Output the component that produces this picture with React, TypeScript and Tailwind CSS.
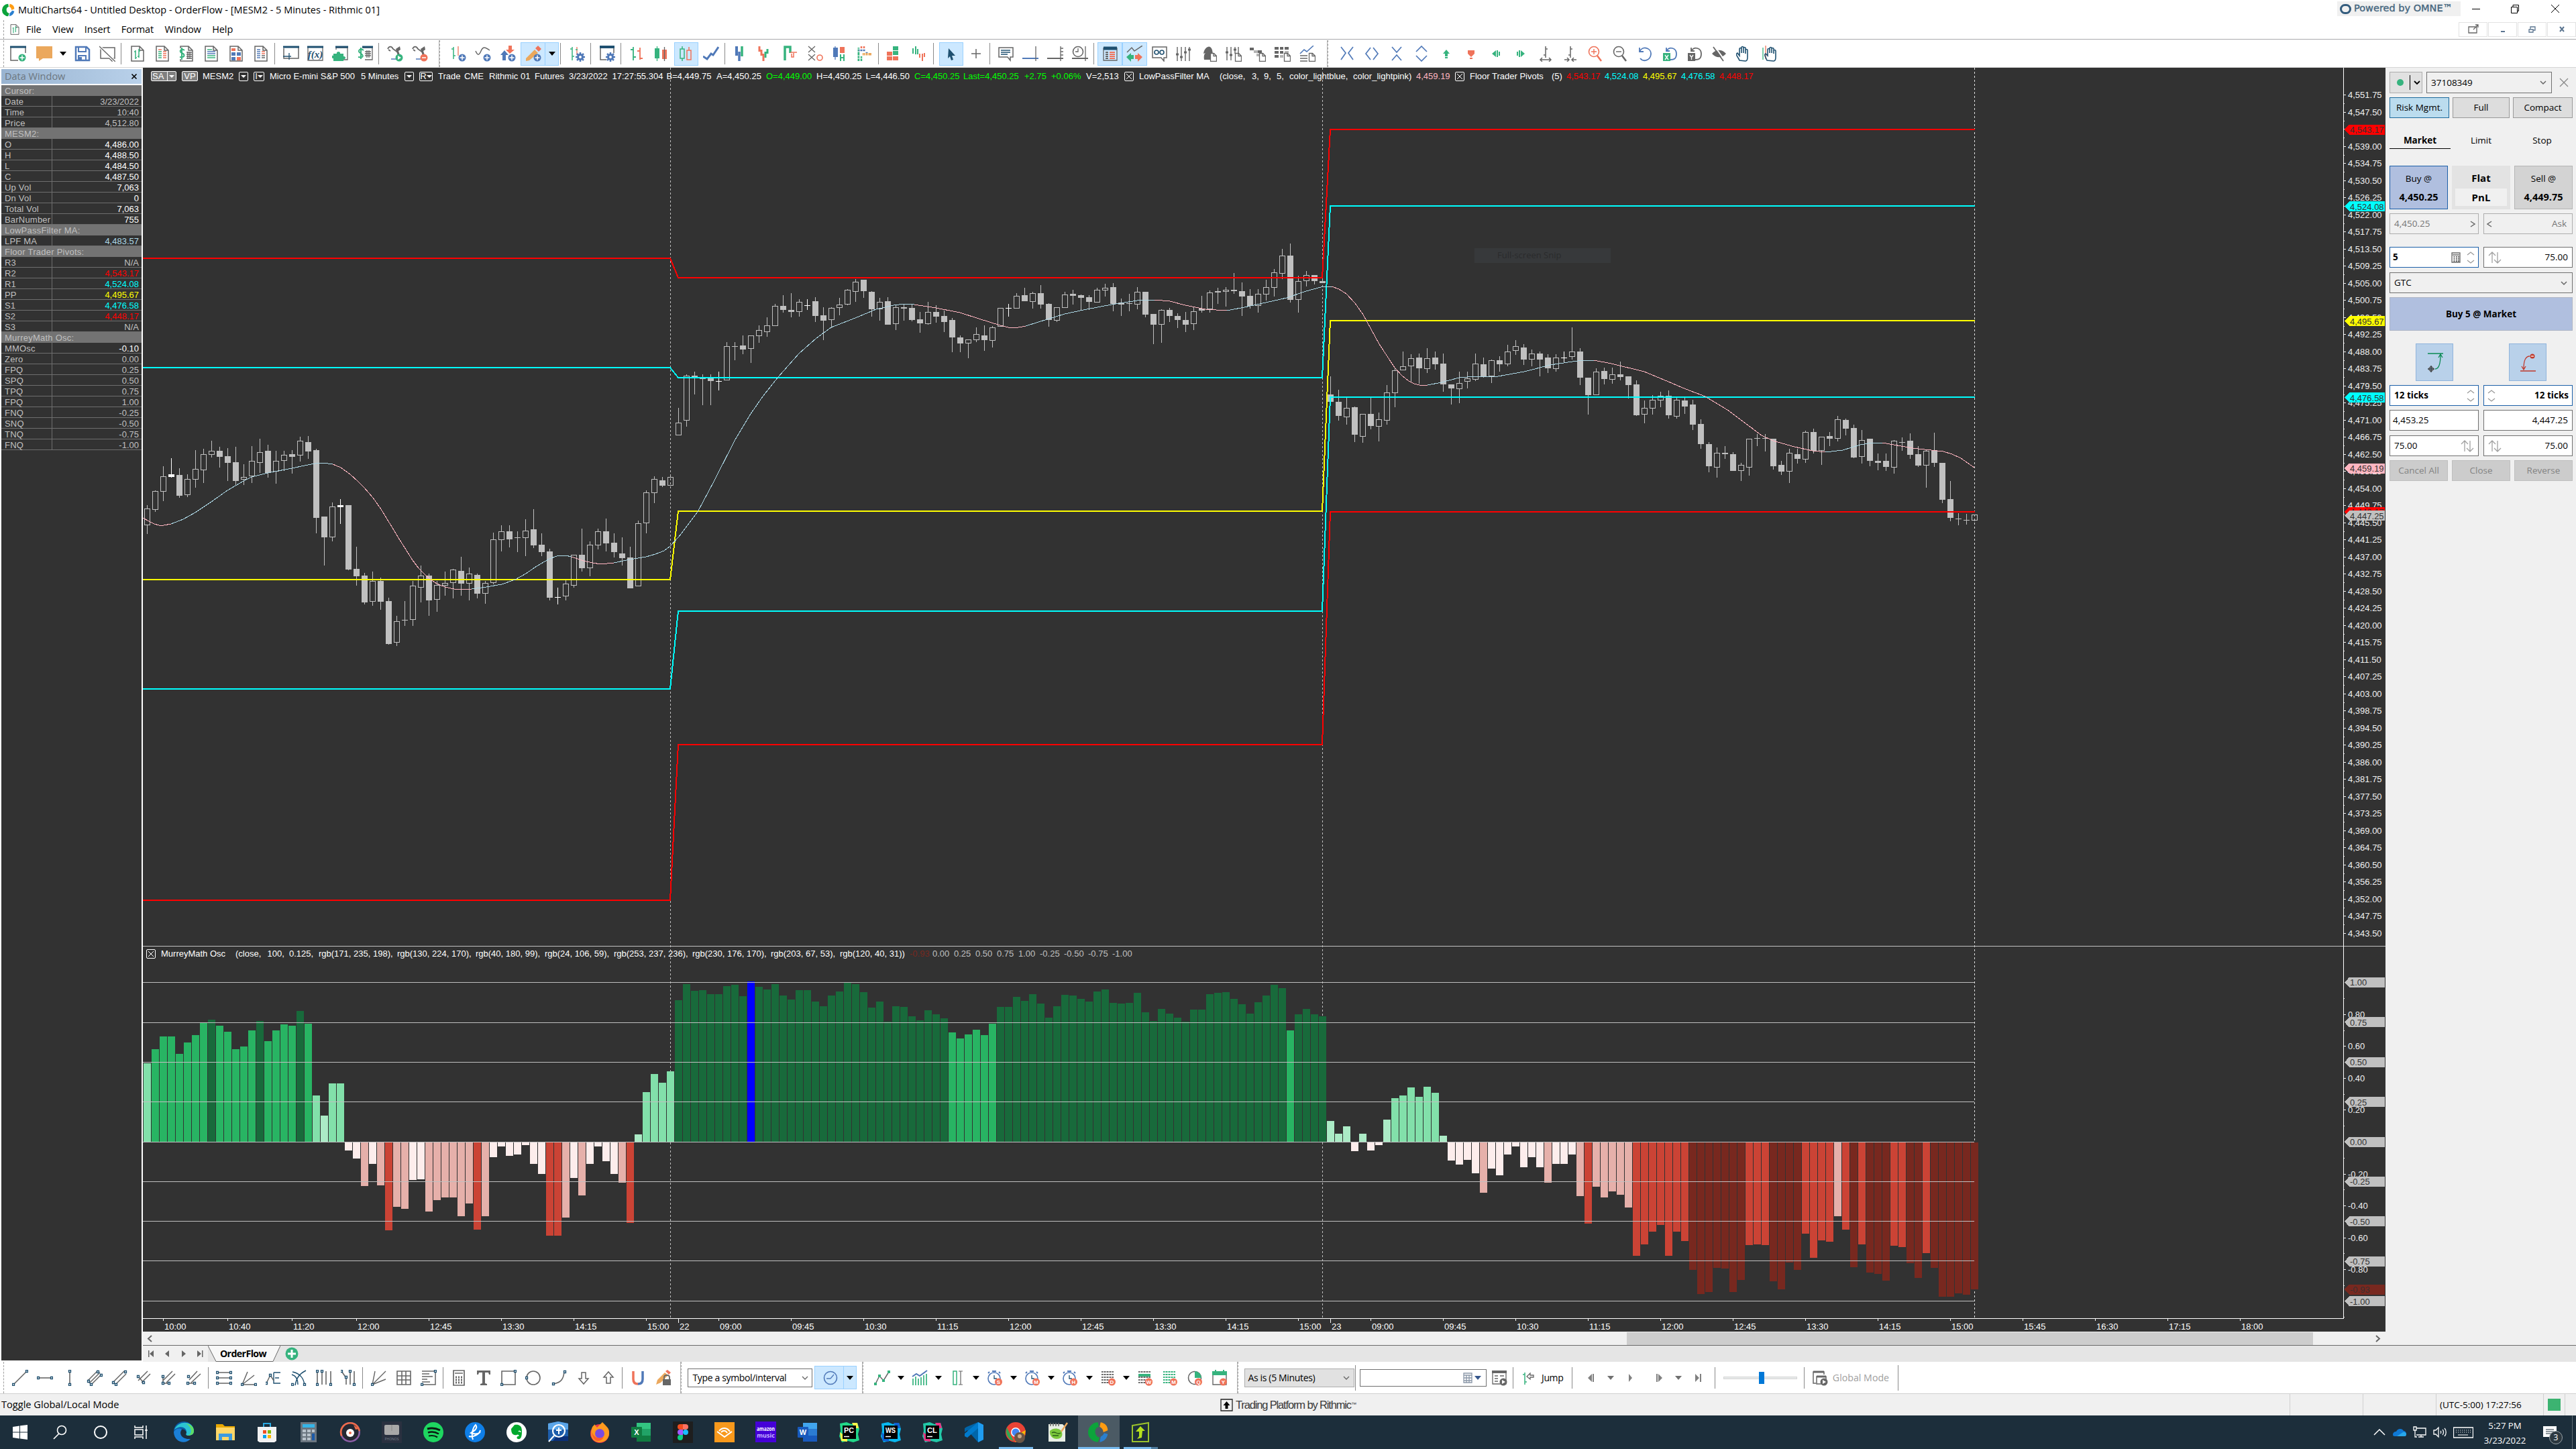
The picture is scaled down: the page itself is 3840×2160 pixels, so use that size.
import type { ReactNode } from 'react';

/* ---------- glyphs ---------- */

const ink: Record<string, string> = {
  k: '#666666',
  g: '#36b37e',
  r: '#ef735a',
  b: '#5079b8',
  n: '#1f5070',
  y: '#eba85d',
  l: '#b4b4b4',
  w: '#ffffff',
  x: '#000000',
};

// "k2 M0 0h4" strokes, "+g M..." fills; shapes are divided by |
function Glyph({ d, size = 24, box = 24, label, labelX = 17.5, labelY = 21 }: { d: string; size?: number; box?: number; label?: string; labelX?: number; labelY?: number }) {
  return (
    <svg width={size} height={size} viewBox={`0 0 ${box} ${box}`} className="shrink-0">
      {d.split('|').map((part, i) => {
        const m = part.match(/^(\+?)(#[0-9a-f]{6}|[a-z])\s?([\d.]*)\s(.*)$/);
        if (!m) return null;
        const color = ink[m[2]] ?? m[2];
        return m[1] ? (
          <path key={i} d={m[4]} fill={color} />
        ) : (
          <path key={i} d={m[4]} fill="none" stroke={color} strokeWidth={m[3] || 1.3} />
        );
      })}
      {label && (
        <text x={labelX} y={labelY} fontSize="8" fontWeight="bold" fill="#fff" textAnchor="middle" fontFamily="Liberation Sans, sans-serif">
          {label}
        </text>
      )}
    </svg>
  );
}

const circle = (x: number, y: number, r: number) => `M${x - r} ${y}a${r} ${r} 0 1 0 ${2 * r} 0a${r} ${r} 0 1 0 ${-2 * r} 0`;
const disc = (c: string, x = 18, y = 18, r = 5.5) => `+${c} ${circle(x, y, r)}`;
const ring = (c: string, x: number, y: number, r: number) => `${c} ${circle(x, y, r)}`;
const plus = (c: string) => `${disc(c)}|w1.5 M18 14.5v7M14.5 18h7`;
const page = 'k1.5 M3 1h12l6 6v16H3ZM15 1v6h6';
const gear = `${disc('b', 17, 17, 5)}|b2.5 M17 10v14M10 17h14M12 12l10 10M22 12l-10 10|${disc('w', 17, 17, 2)}`;
const sheet = '+w M14 11h9v13h-9Z|k1.3 M14.5 11.5h5l4 4v8h-9ZM19 11.5v4h4';
const clock = `${ring('b1.6', 11, 13, 9)}|b2 M8 2h6M2 5l2-2M20 5l-2-2|n M11 8v5h4|${disc('r', 17.5, 18, 5.5)}`;
const table = (c: string) => `${c}2 M2 3h18M2 7h18M2 11h18M2 15h18M2 19h18|w1 M5 1v20M9 1v20M13 1v20M17 1v20|${disc('r', 17.5, 18, 5.5)}`;
const node = (pts: [number, number][]) => pts.map(([x, y]) => `+w M${x - 1.5} ${y - 1.5}h3v3h-3Z|n1.3 M${x - 1.5} ${y - 1.5}h3v3h-3Z`).join('|');

const fileIcons = [
  page + '|g1.5 M9 7v13M7 9h2M9 18h2M14 5v13M12 16h2M14 8h2',
  page + '|g1.5 M6 9h5M6 12h5M6 15h5M6 18h5|r1.5 M13 9h5M13 12h5M13 15h5M13 18h5M6 6h5',
  page + '|+w M0 4h12v16H0Z|g2 M9 7c-5-4-9 2-4 4s5 7-3 6M5 3v18|k M12 10h8M12 13h8M12 16h8M12 19h8M14 9v11M17 9v11',
  page + '|g1.5 M6 6h7|b1.5 M6 9h12M6 12h12|g1.5 M6 15h12M6 18h12',
  page + '|+b M5 10h6v5H5ZM13 10h6v5h-6Z|+r M5 4h6v4H5ZM13 17h6v5h-6Z|+b M5 17h6v5H5Z',
  page + '|b1.5 M6 6h5M6 9h5M6 12h5M6 15h5M6 18h5|r1.5 M13 9h5M13 12h5|k1.5 M13 15h5M13 18h5',
];
const insertIcons = [
  'k1.5 M1 4v15h22V3|n3 M0 2h24|n1.3 M0 16h12M9 11v10',
  'k1.3 M6 6V3h17v18h-6|n3 M5 2h19|+g M2 12h5c-1-4 6-4 5 0h5v4c4-1 4 5 0 4v3H2v-4c-4 0-4-5 0-4Z',
  'k1.3 M8 3h15v18H12|n3 M8 2h16|g2 M10 7C5 3 0 8 5 11s6 8-3 6M6 3v17|k M12 9h9M12 12h9M12 15h9M15 7v11M18 7v11',
];
const arm = 'k1.8 M1 5c2-5 6-4 8 0l7 5M2 6l3 2|+k M13 5l6-4 1 5-3 2 3 9-4-2Z|b1.5 M6 20h9';
const seriesIcons = ['r M12 1v14|g1.5 M5 2v18M2 5h3M5 15h3', 'k1.5 M1 8c3 7 5 7 8 0s6-6 13-1', '+r M13 0h5v6h4l-7 6-6-6h4Z|+b M1 14l6-7 6 7H9v8H4v-8Z'];

const styleIcons = [
  'g1.8 M7 2v20M3 6h4M7 17h4|r1.8 M17 3v18M13 8h4M17 19h4',
  '+g M2 4h7v15H2Z|+r M13 6h7v14h-7Z|g M5.5 1v22|k M16.5 2v21',
  'g1.5 M3 5h6v14H3ZM6 1v4M6 19v4|r1.5 M13 7h6v14h-6ZM16 2v5',
  'b3 M0 16l6 4 6-8 3 2 8-12',
];
const barIcons = [
  'b4 M5 1v14|b3.500 M9 9v14|g3.500 M13 1v15',
  'r3 M3 1v8M6 6v9M9 12v11|g3 M12 9v9M15 5v7',
  'g3.5 M4 22V2h8v9|r1.5 M12 10h10M14 12v5h3v-6',
  'k1.3 M2 1l10 9M12 1L2 10M2 13l10 9M12 13L2 22|' + ring('r1.6', 19, 18, 4),
  '+b M2 3h7v14H2Z|+r M12 2h7v9h-7Z|b M5 1v20|g2 M13 13v10M18 13v10M13 18h5',
  'g3 M3 3v20M7 16v7|r3 M11 1v3M7 1v3|b3 M3 7h10M13 11h4|y4 M8 13h14|w1 M1 5h20M1 9h20M1 15h22M1 19h14M5 0v24M9 0v24M13 0v24M17 0v24',
];
const blockIcons = ['+g M10 1h8v6h-8ZM10 8h8v6h-8Z|+r M1 9h8v6H1ZM1 16h8v6H1ZM10 16h8v6h-8Z', 'g2 M3 4v8M7 1v12M10 5v8|r2 M13 12v6M17 12v11M20 11v6'];
const noteIcons = [
  'k1.5 M2 3h21v14h-4v5l-4-5H2Z|n1.5 M5 7h14M5 10h14M5 13h10',
  'b2 M0 19h24|k1.3 M20 1v22',
  'k2 M0 19h24|k1.3 M20 1v22M20 4h4M20 9h4M20 14h4',
  'k2 M0 19h24|k1.3 M20 1v22|' + ring('k1.6', 9, 9, 7.5) + '|k M9 4v5h-4',
];
const viewIcons = [
  'k1.3 M2 3v19h20V3|n5 M2 4h20|k2 M5 10h4M5 13h4M5 16h4M5 19h4|r2 M11 10h8M11 13h8M11 16h8M11 19h8',
  'k1.5 M1 10l7-7 4 5L24 0|+g M0 17l7-6v3h4v6H7v4Z|+r M24 17l-7-6v3h-4v6h4v4Z',
];
const toolIcons = [
  `k1.5 M2 2h21v16h-4v5l-4-5H2Z|${ring('n1.6', 8, 10, 3)}|${ring('n1.6', 16, 10, 3)}`,
  'k1.4 M2 2v21M8 2v21M14 2v21M20 2v21|k3 M0 13h4M6 17h4M12 10h4M18 6h4',
  '+k M5 21c-1-7 1-9 2-10l-3 1C5 4 11 0 14 2c4 3 4 9 4 19Z|' + sheet,
  'k1.4 M2 2v20M8 2v20M14 2v10M19 2v10|k3 M0 10h4M6 14h4M12 6h4|' + sheet,
  '+k M0 3h6v4H0Z|+l M6 7h6v4H6Z|+k M12 7h6v4h-6Z|+l M10 12h6v4h-6Z|' + sheet,
  '+k M0 2h6v4H0ZM8 2h5v4H8ZM15 2h6v4h-6ZM0 8h6v4H0ZM8 8h5v4H8ZM0 14h6v4H0Z|+l M15 8h6v4h-6ZM8 14h5v4H8Z|' + sheet,
  'b1.6 M1 12l6-6 4 3L21 0|k1.6 M1 15h11M1 19h11M1 23h11|' + sheet,
];
const navIcons = [
  'b1.7 M3 2l7 9-7 10M21 2l-7 9 7 10',
  'b1.7 M10 3l-7 9 7 9M14 3l7 9-7 9',
  'b1.7 M5 2l7 8 7-8M5 22l7-8 7 8',
  'b1.7 M4 9l8-8 8 8M4 15l8 8 8-8',
  '+g M12 6l5 6h-3v4h-4v-4H7ZM10 17h4v2h-4Z',
  '+r M7 7h10v5l-5 5-5-5ZM10 18h4v2h-4Z',
  '+g M6 12l6-5v10ZM13 7h2v10h-2ZM16 9h2v6h-2Z',
  '+g M18 12l-6-5v10ZM9 7h2v10H9ZM6 9h2v6H6Z',
  'k1.5 M12 1v17M12 5h3M9 14h3M4 21h16M7 18l-3 3 3 3M17 18l3 3-3 3',
  'k1.5 M12 1v17M12 5h3M9 14h3M3 21h7M14 21h7M7 18l3 3-3 3M17 18l-3 3 3 3',
  ring('r1.6', 10, 9, 7.5) + '|r1.4 M10 5v8M6 9h8|r2.5 M15 15l6 8',
  ring('k1.6', 10, 9, 7.5) + '|k1.4 M6 9h8|k2.5 M15 15l6 8',
  'b1.8 M4 3v6h6M4 9c5-10 18-5 17 4s-11 12-16 6',
  'b1.8 M7 3v5h5M7 8c5-8 15-4 15 4s-4 9-9 9|+g M2 11h11v12H2Z|w1.3 M5 14l5 7M10 14l-5 7',
  'k1.8 M7 3v5h5M7 8c5-8 15-4 15 4s-4 9-9 9|+k M2 11h11v12H2Z|w1.3 M5 14l2.5 3.5L10 14M7.5 17v4',
  '+k M1 12c6-7 15-7 21 0-6 7-15 7-21 0Z|w2 M5 1l15 21|k1.8 M3 2l15 21',
  'n1.6 M5 22c-2-5-7-9-3-11l3 4V5c0-2 3-2 3 0v6-8c0-2 3-2 3 0v8-7c0-2 3-2 3 0v8-5c0-2 3-2 3 0v10c0 5-2 6-3 6Z',
  'g M3 3v18|r M7 0v20|n1.6 M9 22c-2-5-5-9-2-10l3 3V6c0-2 3-2 3 0v5-7c0-2 3-2 3 0v7-6c0-2 3-2 3 0v7-4c0-2 3-2 3 0v9c0 5-2 6-3 6Z',
];

const drawIcons = [
  ['k1.6 M2 22L22 2|' + node([[2, 22], [22, 2]]), 'k1.6 M2 12h20|' + node([[2, 12], [22, 12]]), 'k1.6 M12 2v20|' + node([[12, 2], [12, 22]]),
    'k1.5 M2 16L17 1M7 22L22 7M4 20L20 4|' + node([[3, 17], [7, 22], [22, 8], [17, 3]]), 'k1.5 M3 18L19 2M6 22L22 6|' + node([[3, 19], [7, 22], [21, 3]]),
    'k1.5 M3 16L17 2M8 19L21 6M3 10l9 10|' + node([[3, 10], [11, 19]]), 'k1.5 M3 16L17 2M8 19L21 6M3 10v10h10|' + node([[3, 10], [3, 20], [12, 20]]), 'k1.5 M5 15L17 2M8 19L22 6M1 20h13|' + node([[4, 10], [3, 20], [13, 20]])],
  ['k1.6 M2 4h20M2 12h20M2 20h20|' + node([[2, 4], [22, 4], [2, 12], [22, 12], [2, 20], [22, 20]]), 'k1.5 M2 22h20M2 22L10 3M2 22L20 8|' + node([[2, 22], [22, 22]]),
    'n1.4 M12 4v16h10M12 4h10M14 12h6|k1.5 M1 20l6-12 5 8|' + node([[1, 20], [7, 8]]), 'n1.5 M2 3c14 3 17 12 18 20M6 23C8 12 12 6 22 1M1 7c8 2 9 9 9 15|' + node([[2, 22], [20, 22]]),
    'k1.6 M2 2v20M9 2v20M15 2v20M22 2v20|' + node([[2, 2], [9, 2], [2, 22], [22, 22]]), 'k1.6 M1 2l7 10M8 11v11M14 2v20M20 2v20|' + node([[1, 2], [8, 11], [14, 2], [20, 22]])],
  ['k1.4 M2 22L6 2M2 22L22 2M2 22l20-8|' + node([[2, 22]]), 'k1.6 M2 2h20v20H2ZM9 2v20M15 2v20M2 9h20M2 15h20', 'k1.5 M2 2h20v20H2M2 6h11M2 10h16M2 14h8M2 18h12|' + node([[2, 22], [22, 2]])],
  ['k1.7 M4 1h16v22H4ZM6 5h12|k3 M7 11h2M11 11h2M15 11h2M7 15h2M11 15h2M15 15h2M7 19h2M11 19h2M15 19h2', '+k M2 1h20v6h-2l-1-3h-5v16l3 1v2H7v-2l3-1V4H5L4 7H2Z', 'k1.6 M2 2h20v20H2Z|' + node([[22, 2], [2, 22]]),
    ring('k1.6', 12, 12, 10) + '|' + node([[2, 12]]), 'k1.6 M4 21c12-2 15-8 16-18|' + node([[4, 21], [21, 3]]), 'k1.5 M9 4h6v9h4l-7 8-7-8h4Z', 'k1.5 M9 20h6v-9h4l-7-8-7 8h4Z'],
];

const Slot = ({ children, on, w = 'w-[36.8px]' }: { children: ReactNode; on?: boolean; w?: string }) => (
  <div className={`flex h-[35px] shrink-0 items-center justify-center ${w} ${on ? 'bg-[#cce8ff] border border-[#99d1ff]' : ''}`}>{children}</div>
);
const Slots = ({ icons, on = [], w }: { icons: string[]; on?: number[]; w?: string }) => (
  <>
    {icons.map((d, i) => (
      <Slot key={i} on={on.includes(i)} w={w}><Glyph d={d} /></Slot>
    ))}
  </>
);
const Sep = ({ wide }: { wide?: boolean }) => <div className={`ml-[2px] h-[32px] w-px shrink-0 bg-[#8a8a8a] ${wide ? 'mr-2' : 'mr-[5px]'}`} />;
const Gutter = () => (
  <div className="flex h-full w-[11px] shrink-0 gap-[3px] border-l border-[#b5b5b5]">
    <div className="h-full border-l border-dashed border-[#a0a0a0]" />
  </div>
);
const Down = ({ c = 'border-t-black' }: { c?: string }) => <div className={`h-0 w-0 border-x-[5px] border-t-[6px] border-x-transparent ${c}`} />;

/* ---------- title, menu, toolbar ---------- */

const MultiChartsLogo = ({ size }: { size: number }) => (
  <svg width={size} height={size} viewBox="0 0 24 24">
    <path d="M11 1A11 11 0 0 0 11 23L13 18C7 17 6 7 12 6Z" fill="#0ca33b" />
    <path d="M14 1c5 1 8 4 8 9l-5 2c0-3-2-5-4-6Z" fill="#ff9c12" />
    <path d="M22 14c-1 5-4 8-9 9l1-6c2-1 3-2 4-4Z" fill="#2a7fcf" />
  </svg>
);

function TitleBar() {
  return (
    <div className="flex h-[30px] items-center pl-[3px] text-[14.5px]">
      <MultiChartsLogo size={20} />
      <span className="ml-[4px]">MultiCharts64 - Untitled Desktop - OrderFlow - [MESM2 - 5 Minutes - Rithmic 01]</span>
      <div className="ml-auto flex h-[22px] w-[184px] items-center gap-1 bg-[#f0f0f0] pl-1 mb-1 font-['DejaVu_Sans'] text-[14.5px] font-medium text-[#46677f]">
        <div className="h-[15px] w-[17px] shrink-0 rounded-full border-[3px] border-[#335c7d]" />
        <span className="whitespace-nowrap [-webkit-text-stroke:0.4px]">Powered by OMNE™</span>
      </div>
      <div className="mb-1 flex w-[172px] items-center">
        <span className="flex w-[46px] justify-center"><i className="h-px w-3 bg-black" /></span>
        <span className="flex w-[70px] justify-center"><Glyph size={14} box={14} d="x1 M1.5 4.5h9v9h-9ZM4 4V1.5h8.5v9H11" /></span>
        <span className="flex w-[49px] justify-center"><Glyph size={14} box={14} d="x1 M1 1l12 12M13 1L1 13" /></span>
      </div>
    </div>
  );
}

const mdiGlyphs = ['k M1 4h12v9H1ZM8 8l7-7M11 1h4v4', '#5b7590 2 M5 11h6', '#5b7590 M3 8h6v4H3ZM5 7V4h7v5h-3', '#5b7590 2 M5 4l6 7M11 4l-6 7'];

function MenuBar() {
  return (
    <div className="flex h-[29px] items-center border-b border-[#a9a9ad] pl-[5px] text-[14.5px]">
      <div className="h-full border-l border-dashed border-[#a0a0a0]" />
      <div className="ml-[8px] mr-[9px]"><Glyph size={16} d={page + '|g1.7 M9 7v13M7 9h2M14 5v13M14 8h2'} /></div>
      {['File', 'View', 'Insert', 'Format', 'Window', 'Help'].map((m) => (
        <span key={m} className="mr-[16.5px] tracking-[-0.1px]">{m}</span>
      ))}
      <div className="ml-auto flex h-full gap-px pt-[3px] pb-[3px]">
        {mdiGlyphs.map((g) => (
          <div key={g} className="flex w-[43px] items-center justify-center border border-[#e2e2e2]"><Glyph size={16} box={16} d={g} /></div>
        ))}
      </div>
    </div>
  );
}

function Toolbar() {
  return (
    <div className="flex h-[41px] items-center border-b border-[#d5d5d5]">
      <div className="ml-[5px] mr-[3px] h-full border-l border-dashed border-[#a0a0a0]" />
      <Slot><Glyph d={'k1.5 M1 2v20h11M23 2v9|n3 M0 2h24|' + plus('g')} /></Slot>
      <div className="flex w-[41px] justify-center"><Glyph d="+y M0 1h24v18H10l-6 4v-4H0Z" /></div>
      <div className="flex w-[18px] justify-center pr-1"><Down /></div>
      <Slots icons={['b2.5 M2 2h16l4 4v16H2Z|b2 M6 2v7h11V2|b2 M6 22v-7h11v7|+b M7 17h4v5H7Z', 'k1.5 M2 3h21v16h-4v4l-4-4H2Z|w4 M0 1l24 23|k1.3 M0 1l24 23']} />
      <Sep />
      <Slots icons={fileIcons} />
      <Sep />
      <Slot><Glyph d={insertIcons[0]} /></Slot>
      <Slot>
        <svg width="24" height="24" viewBox="0 0 24 24">
          <path d="M1 3v19h22V3" fill="none" stroke="#666" strokeWidth="1.3" />
          <path d="M0 0.500h24v3H0Z" fill="#1f5070" />
          <text x="12" y="18" textAnchor="middle" fontSize="15" fontStyle="italic" fontFamily="Liberation Serif, serif" fontWeight="bold" fill="#1f5070">f(x)</text>
        </svg>
      </Slot>
      <Slots icons={insertIcons.slice(1)} />
      <Sep />
      <Slots icons={[arm + `|${disc('g')}|+w M16 15l5 3-5 3Z`, arm + `|${disc('r')}|w1.5 M15 18h6`]} />
      <div className="ml-[10px] flex h-full"><Gutter /></div>
      <Slots icons={seriesIcons.map((s) => s + '|' + plus('b'))} />
      <div className="ml-px flex h-[35px] w-[57px] items-center border border-[#99d1ff] bg-[#cce8ff]">
        <div className="flex h-full w-[36px] items-center justify-center border-r border-[#99d1ff]">
          <Glyph d={'+y M1 19L14 6l5 5L6 22l-5 1Z|+r M15 4l4-4 5 5-4 4Z|' + plus('b')} />
        </div>
        <div className="flex flex-1 justify-center"><Down /></div>
      </div>
      <Sep />
      <Slots icons={['r M12 2v12|g1.5 M5 2v20M2 5h3M5 16h3M10 6h3|' + gear]} />
      <Sep />
      <Slots icons={['k1.5 M2 3v18h9M22 3v8|n4 M1 2h22|' + gear]} />
      <Sep />
      <Slots icons={styleIcons} on={[2]} />
      <Sep />
      <Slots icons={barIcons} />
      <Sep />
      <Slots icons={blockIcons} />
      <Sep wide />
      <Slots icons={['+n M8 4l10 11h-5l2 6-3 1-2-6-3 3Z', 'k1.5 M12 5v14M5 12h14']} on={[0]} />
      <Sep />
      <Slots icons={noteIcons} />
      <Sep />
      <Slots icons={viewIcons} on={[0, 1]} />
      <Slots icons={toolIcons} />
      <div className="ml-[11px] flex h-full"><Gutter /></div>
      <Slots icons={navIcons} w="w-[37px]" />
    </div>
  );
}

/* ---------- data window ---------- */

const dataRows: [string, string?, string?][] = [
  ['Cursor:'], ['Date', '3/23/2022'], ['Time', '10:40'], ['Price', '4,512.80'],
  ['MESM2:'], ['O', '4,486.00', 'text-white'], ['H', '4,488.50', 'text-white'], ['L', '4,484.50', 'text-white'], ['C', '4,487.50', 'text-white'],
  ['Up Vol', '7,063', 'text-white'], ['Dn Vol', '0', 'text-white'], ['Total Vol', '7,063', 'text-white'], ['BarNumber', '755', 'text-white'],
  ['LowPassFilter MA:'], ['LPF MA', '4,483.57', 'text-[#add8e6]'],
  ['Floor Trader Pivots:'], ['R3', 'N/A'], ['R2', '4,543.17', 'text-[#ff0000]'], ['R1', '4,524.08', 'text-[#00ffff]'], ['PP', '4,495.67', 'text-[#ffff00]'],
  ['S1', '4,476.58', 'text-[#00ffff]'], ['S2', '4,448.17', 'text-[#ff0000]'], ['S3', 'N/A'],
  ['MurreyMath Osc:'], ['MMOsc', '-0.10', 'text-white'], ['Zero', '0.00'], ['FPQ', '0.25'], ['SPQ', '0.50'], ['TPQ', '0.75'], ['FPQ', '1.00'],
  ['FNQ', '-0.25'], ['SNQ', '-0.50'], ['TNQ', '-0.75'], ['FNQ', '-1.00'],
];

function DataWindow() {
  return (
    <aside className="flex h-[1929px] w-[213px] shrink-0 flex-col border-2 border-white bg-[#323232] font-['Liberation_Sans'] text-[13px] text-[#c0c0c0]">
      <div className="flex h-[24px] shrink-0 items-center justify-between border-b-2 border-white bg-gradient-to-r from-[#99b4d1] to-[#b9d1ea] pl-[5px] pr-[6px] font-['Open_Sans'] text-[14.5px] text-[#6d7780]">
        <span>Data Window</span>
        <Glyph size={10} box={10} d="x1.6 M1.500 1.500l7 7M8.500 1.500l-7 7" />
      </div>
      {dataRows.map(([k, v, c], i) =>
        v === undefined ? (
          <div key={i} className="h-[16px] bg-[#737373] pl-[5px] leading-[17px] tracking-[0.25px]">{k}</div>
        ) : (
          <div key={i} className="flex h-[16px] border-b border-[#6e6e6e] leading-[17px]">
            <span className="h-[15px] w-[76px] border-r border-[#6e6e6e] pl-[5px] tracking-[0.2px]">{k}</span>
            <span className={`flex-1 pr-[4px] text-right ${c ?? ''}`}>{v}</span>
          </div>
        )
      )}
    </aside>
  );
}

/* ---------- chart ---------- */

const barX = (i: number) => 219 + 12 * i;

// high, body top, body bottom, low; H hollow, F filled, W flagged in white
const candles = `753 758 783 796H 731 732 760 763H 695 710 733 747H 683 707 711 712W 698 708 739 742F 707 714 738 741H 671 699 715 727H 669 677 701 720H
657 672 678 682H 666 672 681 697F 668 680 690 717F 666 689 717 723F 692 711 715 723H 665 687 710 720H 654 674 690 705H 663 672 705 712F
672 687 703 721H 672 678 687 702H 671 677 681 706F 651 657 679 688H 650 659 673 684F 669 671 772 795F 770 770 801 843F 749 755 801 807H
744 753 756 781W 753 753 849 850F 815 848 859 873F 854 858 898 901F 852 866 897 903H 861 866 897 909F 891 896 960 961F 918 926 958 963H
896 924 924 933H 866 873 924 933H 843 858 876 898H 855 858 895 918F 866 872 894 912H 852 869 873 888H 848 849 869 892H 830 851 870 888F
846 855 870 895H 855 857 885 892F 866 869 885 900H 794 804 869 871H 783 792 805 822H 783 792 804 816F 792 801 801 823H 774 791 802 829H
759 789 813 817F 795 812 823 829F 818 822 891 895F 876 890 890 901W 864 870 889 895H 827 827 873 876H 788 827 847 852F 807 812 847 859H
788 792 813 819H 773 792 810 822F 795 809 823 831F 801 825 832 843F 815 831 877 877F 776 780 874 874H 731 734 780 795H 710 714 735 750H
711 716 724 726F 707 711 724 724H 608 630 649 649H 558 560 627 636H 554 560 564 588F 558 564 564 604H 558 564 568 604F 554 568 568 582W
510 516 567 567H 510 516 516 537H 500 515 521 528F 500 500 520 541H 485 492 501 511H 473 485 495 502H 453 456 486 486H 440 456 462 466F
437 462 465 473F 446 450 465 472H 446 455 455 462W 443 449 471 480F 458 470 478 507F 458 459 477 489H 444 454 459 470H 431 432 454 455H
416 420 435 450H 417 417 434 444F 434 435 461 472F 444 450 461 478H 443 449 484 484F 455 458 483 492H 454 458 460 478F 453 459 477 479F
465 476 482 496F 450 465 483 484H 455 465 472 481F 463 471 480 495F 474 477 503 525F 500 503 512 525F 506 506 512 534H 488 498 507 510H
485 500 507 523F 486 488 508 518H 459 459 487 487H 453 459 459 472W 437 441 460 460H 429 440 449 449F 435 437 450 460H 425 437 454 460F
452 453 477 487F 458 458 478 480H 435 439 459 459H 432 438 441 454F 439 440 444 462F 440 443 450 462F 429 432 451 451H 423 429 433 442H
422 428 453 464F 445 451 454 471F 438 452 452 464H 428 435 454 461H 435 435 469 473F 468 468 484 513F 461 462 484 511H 459 462 471 480F
467 471 477 489F 465 477 484 495F 458 464 483 492H 441 460 463 466F 433 436 461 466H 429 434 436 453F 428 432 435 457H 407 432 434 438F
421 434 442 471F 431 441 456 460F 431 438 456 466H 417 428 439 448H 401 406 429 442H 371 381 408 416H 363 381 447 451F 411 419 447 466H
404 410 419 427H 410 410 419 424F 412 419 422 422F 561 588 599 599F 581 599 620 627F 592 608 622 633H 606 607 648 659F 617 617 651 660H
592 617 635 640F 615 625 636 658H 574 585 627 633H 549 552 586 607H 524 546 552 552H 528 534 546 570H 527 533 549 572F 519 534 550 556H
524 533 543 551F 527 542 573 584F 573 573 579 603F 554 571 580 601H 554 564 569 579H 527 542 566 568H 533 543 561 563F 536 537 561 571H
531 537 543 554F 514 524 543 546H 507 516 523 529H 513 518 536 544F 521 527 536 546H 524 527 536 561F 528 533 549 556F 528 533 550 554H
524 533 533 541W 488 524 532 536H 519 524 563 574F 563 563 589 618F 549 554 589 589H 548 553 565 573F 548 558 566 572H 539 558 562 567F
561 561 574 594F 567 573 619 620F 597 608 618 631H 589 596 609 618H 584 590 597 607H 582 590 619 624F 592 596 621 624H 592 597 606 617F
596 603 633 641F 625 632 662 669F 659 662 695 704F 667 675 697 712H 665 675 677 684F 674 677 702 702F 690 693 702 717H 654 654 697 709H
647 653 653 665H 647 653 653 673H 654 654 695 700F 687 693 703 708F 669 675 703 720H 669 677 684 691F 642 644 685 690H 639 644 672 676F
651 651 672 693H 644 650 654 665F 620 625 654 658H 624 626 639 649F 633 638 682 683F 641 656 681 691H 654 654 687 695F 676 687 690 701F
676 687 696 702F 656 657 697 706H 652 659 659 672H 646 657 678 684F 665 677 694 696F 670 672 694 727H 645 671 690 696F 690 690 745 750F
717 744 772 777F 765 773 773 783H 766 775 775 782H 767 767 776 777H`
  .match(/\d+ \d+ \d+ \d+[HFW]/g)!
  .map((s) => ({ v: s.slice(0, -1).split(' ').map(Number), kind: s.slice(-1) }));

// oscillator bars, pixels away from the zero line
const osc = [
  117, 138, 157, 157, 131, 148, 159, 178, 182, 173, 164, 138, 142, 166, 180, 150, 166, 175, 173, 195, 176, 69, 39, 87, 87, -12, -24, -65, -32, -64, -131, -96, -99, -56, -55,
  -103, -86, -82, -82, -110, -91, -130, -110, -22, -6, -20, -18, -4, -32, -47, -139, -139, -112, -53, -79, -32, -6, -28, -47, -60, -120, 11, 74, 101, 88, 105,
  211, 235, 225, 226, 220, 220, 232, 234, 217, 239, 231, 227, 235, 218, 212, 226, 226, 209, 202, 218, 224, 237, 235, 223, 200, 209, 179, 202, 201, 187, 181, 196, 190, 184,
  163, 154, 160, 167, 159, 176, 201, 201, 216, 210, 220, 206, 185, 202, 219, 218, 213, 209, 224, 227, 207, 206, 207, 222, 193, 180, 198, 191, 185, 179, 197, 197, 220, 222,
  223, 213, 205, 191, 208, 218, 234, 229, 166, 190, 198, 190, 187,
  31, 12, 23, -13, 12, -12, -4, 33, 65, 69, 81, 67, 82, 73, 9, -27, -33, -26, -46, -75, -39, -49, -18, -6, -37, -22, -37, -60, -32, -32, -18, -80, -121, -66, -82, -73, -78,
  -97, -169, -152, -133, -123, -169, -133, -147, -190, -226, -223, -187, -188, -223, -205, -153, -152, -153, -207, -219, -179, -190, -136, -172, -146, -148, -110, -130,
  -186, -152, -194, -196, -206, -154, -156, -180, -202, -165, -187, -230, -230, -225, -227, -219,
];
const SELECTED_BAR = 75;
const upShades = ['#abebc6', '#82e0aa', '#28b463', '#186a3b'];
const downShades = ['#fdedec', '#e6b0aa', '#cb4335', '#78281f'];
const shade = (h: number) => (h >= 0 ? upShades : downShades)[Math.min(3, Math.floor(Math.abs(h) / 59.5))];

const average: ['p' | 'b', string][] = [
  ['p', '213,772 222,777 230,781 237,783 244,783 255,781'],
  ['b', '255,781 273,774 291,764 315,748 339,731 363,717 375,711 387,708 399,705 435,698 459,693 470,691 481,690 489,691 496,692'],
  ['p', '496,692 508,697 522,707 533,717 543,727 556,742 568,759 579,777 596,805 615,835 624,847 633,856 642,864 651,870 663,875 677,878 690,879 703,878'],
  ['b', '703,878 725,875 748,871 768,864 784,855 800,844 819,833 830,829 843,828 852,830'],
  ['p', '852,830 870,836 883,839 896,841 915,839'],
  ['b', '915,839 939,834 963,830 977,826 990,821 999,814 1012,800 1025,783 1040,763 1064,718 1095,657 1119,617 1137,591 1160,562 1191,527 1217,504 1239,488 1275,474 1306,461 1332,455 1348,453 1363,454'],
  ['p', '1363,454 1395,459 1431,466 1459,475 1491,485 1503,488 1513,489 1529,486'],
  ['b', '1529,486 1561,476 1587,468 1615,462 1657,454 1695,448 1721,447'],
  ['p', '1721,447 1744,449 1767,455 1797,461 1829,463'],
  ['b', '1829,463 1855,458 1887,451 1918,444 1947,434 1969,428 1977,427 1985,427'],
  ['p', '1985,427 1996,431 2007,438 2020,452 2032,469 2056,513 2079,548 2090,560 2100,568 2108,572 2116,574 2128,574'],
  ['b', '2128,574 2149,570 2175,563 2199,561 2233,561 2272,554 2311,544 2344,539 2360,537 2376,537'],
  ['p', '2376,537 2402,542 2451,554 2480,566 2513,580 2542,591 2575,611 2610,637 2626,649 2643,657 2675,666 2702,672 2721,674'],
  ['b', '2721,674 2747,671 2773,663 2790,660 2806,660'],
  ['p', '2806,660 2851,668 2897,673 2910,677 2923,683 2943,697'],
];

const pivots: [string, number, number, number][] = [
  ['#ff0000', 385, 414, 193],
  ['#00ffff', 548, 563, 307],
  ['#ffff00', 864, 762, 478],
  ['#00ffff', 1027, 911, 592],
  ['#ff0000', 1342, 1110, 763],
];

const times: [number, string][] = [
  [2, '10:00'], [10, '10:40'], [18, '11:20'], [26, '12:00'], [35, '12:45'], [44, '13:30'], [53, '14:15'], [62, '15:00'], [66, '22'],
  ...['09:00', '09:45', '10:30', '11:15', '12:00', '12:45', '13:30', '14:15', '15:00'].map((t, i): [number, string] => [71 + 9 * i, t]),
  [147, '23'],
  ...['09:00', '09:45', '10:30', '11:15', '12:00', '12:45', '13:30', '14:15', '15:00', '15:45', '16:30', '17:15', '18:00'].map((t, i): [number, string] => [152 + 9 * i, t]),
];

const tags: [number, string, string][] = [
  [193, '4,543.17', '#ff0000'], [307.5, '4,524.08', '#00ffff'], [478.5, '4,495.67', '#ffff00'], [592.5, '4,476.58', '#00ffff'],
  [698, '4,459.19', '#ffb6c1'], [763, '4,448.17', '#ff0000'], [768.5, '4,447.25', '#c0c0c0'], [1922, '-0.93', '#78281f'],
  ...[1, 0.75, 0.5, 0.25, 0, -0.25, -0.5, -0.75, -1].map((v): [number, string, string] => [1702 - v * 237.6, v.toFixed(2), '#c0c0c0']),
];

function Chart() {
  return (
    <svg width="3343" height="1884" viewBox="213 101 3343 1884" className="block bg-[#323232]" fontFamily="Liberation Sans, sans-serif" fontSize="13" shapeRendering="crispEdges">
      {[65, 146].map((i) => <path key={i} d={`M${barX(i) + 0.5} 101V1964`} stroke="#c0c0c0" strokeDasharray="3 3" />)}
      <path d="M2943.5 101V1964" stroke="#e0e0e0" strokeDasharray="3 3" />
      <path d="M213 1410.500H3556" stroke="#c0c0c0" />

      {candles.map(({ v: [hi, top, bot, lo], kind }, i) => {
        const x = barX(i);
        const c = kind === 'W' ? '#ffffff' : '#c0c0c0';
        return (
          <g key={i}>
            <path d={`M${x + 0.5} ${hi}V${top}M${x + 0.5} ${bot}V${lo}`} stroke={c} />
            {kind === 'H' && bot - top > 1 ? (
              <rect x={x - 3.5} y={top + 0.5} width="8" height={bot - top - 1} fill="none" stroke={c} />
            ) : (
              <rect x={x - 4} y={top} width="9" height={Math.max(1, bot - top)} fill={c} />
            )}
          </g>
        );
      })}
      {pivots.map(([c, a, b, d], i) => (
        <path key={i} d={`M213 ${a}H999L1011 ${b}H1971L1983 ${d}H2944`} fill="none" stroke={c} strokeWidth="2" />
      ))}
      {average.map(([c, pts], i) => (
        <polyline key={i} points={pts} fill="none" stroke={c === 'p' ? '#ffb6c1' : '#add8e6'} />
      ))}

      {osc.map((h, i) => (
        <rect key={i} x={barX(i) - 5} y={h > 0 ? 1702 - h : 1703} width="11" height={Math.abs(h)} fill={i === SELECTED_BAR ? '#0000ff' : shade(h)} />
      ))}
      {[1464, 1524, 1583, 1642, 1702, 1761, 1820, 1879, 1939].map((y) => (
        <path key={y} d={`M213 ${y + 0.5}H2943`} stroke="#c0c0c0" />
      ))}

      <path d="M3493.500 101V1965M213 1965.500H3494" stroke="#ffffff" />
      {Array.from({ length: 50 }, (_, k) => {
        const y = Math.round(141 + 25.51 * k);
        return (
          <g key={k} fill="#f0f0f0">
            <rect x="3494" y={y} width="3" height="1" />
            {k < 49 && <rect x="3494" y={y + 13} width="1" height="1" />}
            <text x="3500" y={y + 5}>{(4551.75 - 4.25 * k).toLocaleString('en-US', { minimumFractionDigits: 2 })}</text>
          </g>
        );
      })}
      {[0.8, 0.6, 0.4, 0.2, -0.2, -0.4, -0.6, -0.8].map((v) => (
        <g key={v} fill="#f0f0f0">
          <rect x="3494" y={Math.round(1702 - v * 237.6)} width="3" height="1" />
          <text x="3500" y={Math.round(1702 - v * 237.6) + 5}>{v.toFixed(2)}</text>
        </g>
      ))}
      {[0.9, 0.7, 0.3, 0.1, -0.1, -0.3, -0.7, -0.9, -1.1].map((v) => (
        <rect key={v} x="3494" y={Math.round(1702 - v * 237.6)} width="1" height="1" fill="#f0f0f0" />
      ))}
      {tags.map(([y, t, c]) => (
        <g key={t}>
          <path d={`M3495 ${y}l7 -7.500h53v15h-53Z`} fill={c} />
          <text x="3503" y={y + 5} fill={c === '#78281f' ? '#3a3030' : '#323232'}>{t}</text>
        </g>
      ))}
      {times.map(([i, t]) => (
        <g key={i} fill="#ffffff">
          <rect x={barX(i)} y="1966" width="1" height={t.length === 2 ? 6 : 3} />
          <text x={barX(i) + 2} y="1982">{t}</text>
        </g>
      ))}
    </svg>
  );
}

const Check = ({ className = '' }: { className?: string }) => (
  <span className={`flex h-[14px] w-[14px] shrink-0 items-center justify-center rounded-[2px] border border-white ${className}`}><Glyph size={8} box={8} d="w1 M0 0l8 8M8 0L0 8" /></span>
);
const Drop = () => <i className="h-0 w-0 border-x-[4px] border-t-[4px] border-x-transparent border-t-white" />;

const quote: [string, string][] = [
  ['Trade', 'w-[39px]'], ['CME', 'w-[37px]'], ['Rithmic 01', 'w-[68px]'], ['Futures', 'w-[51px]'], ['3/23/2022', 'w-[64.5px]'], ['17:27:55.304', 'w-[81px]'],
  ['B=4,449.75', 'w-[74.5px]'], ['A=4,450.25', 'w-[74px]'], ['O=4,449.00', 'w-[75px] text-[#00ff00]'], ['H=4,450.25', 'w-[73.5px]'], ['L=4,446.50', 'w-[72.5px]'],
  ['C=4,450.25', 'w-[73px] text-[#00ff00]'], ['Last=4,450.25', 'w-[91px] text-[#00ff00]'], ['+2.75', 'w-[40px] text-[#00ff00]'], ['+0.06%', 'w-[52px] text-[#00ff00]'], ['V=2,513', 'w-[57px]'],
];
const lowPass: [string, string][] = [
  ['LowPassFilter MA', 'w-[120px]'], ['(close,', 'w-[48px]'], ['3,', 'w-[18px]'], ['9,', 'w-[19px]'], ['5,', 'w-[19px]'], ['color_lightblue,', 'w-[95px]'], ['color_lightpink)', 'w-[94px]'],
  ['4,459.19', 'w-[57px] text-[#ffb6c1]'],
];
const floorPivots: [string, string][] = [
  ['Floor Trader Pivots', 'w-[122px]'], ['(5)', 'w-[22px]'], ['4,543.17', 'w-[57px] text-[#ff0000]'], ['4,524.08', 'w-[57px] text-[#00ffff]'], ['4,495.67', 'w-[57px] text-[#ffff00]'],
  ['4,476.58', 'w-[57px] text-[#00ffff]'], ['4,448.17', 'w-[57px] text-[#ff0000]'],
];
const murrey: [string, string][] = [
  ['MurreyMath Osc', 'w-[111px]'], ['(close,', 'w-[47.5px]'], ['100,', 'w-[32.5px]'], ['0.125,', 'w-[44px]'], ['rgb(171, 235, 198),', 'w-[117px]'], ['rgb(130, 224, 170),', 'w-[117px]'],
  ['rgb(40, 180, 99),', 'w-[103px]'], ['rgb(24, 106, 59),', 'w-[103px]'], ['rgb(253, 237, 236),', 'w-[117px]'], ['rgb(230, 176, 170),', 'w-[117px]'], ['rgb(203, 67, 53),', 'w-[103px]'],
  ['rgb(120, 40, 31))', 'w-[104px]'], ['-0.93', 'w-[34px] text-[#78281f]'], ['0.00', 'w-[32px] text-[#c0c0c0]'], ['0.25', 'w-[32px] text-[#c0c0c0]'], ['0.50', 'w-[32px] text-[#c0c0c0]'],
  ['0.75', 'w-[32px] text-[#c0c0c0]'], ['1.00', 'w-[32px] text-[#c0c0c0]'], ['-0.25', 'w-[36px] text-[#c0c0c0]'], ['-0.50', 'w-[36px] text-[#c0c0c0]'], ['-0.75', 'w-[36px] text-[#c0c0c0]'], ['-1.00', 'w-[36px] text-[#c0c0c0]'],
];
const Cells = ({ cells }: { cells: [string, string][] }) => (
  <>
    {cells.map(([t, w], i) => (
      <span key={i} className={`shrink-0 whitespace-nowrap ${w}`}>{t}</span>
    ))}
  </>
);

function ChartWindow() {
  return (
    <section className="flex w-[3343px] shrink-0 flex-col">
      <div className="relative h-[1884px]">
        <Chart />
        <div className="absolute left-0 top-0 flex h-[25px] items-center pl-[12px] font-['Liberation_Sans'] text-[13px] text-white">
          <span className="flex h-[15px] w-[38px] items-center rounded-[2px] border border-white bg-[#808080] pl-[1px] leading-none">
            <b className="w-[22px] font-normal">SA</b>
            <span className="flex h-full flex-1 items-center justify-center border-l border-white"><Drop /></span>
          </span>
          <span className="ml-[8px] mr-[7px] flex h-[15px] w-[24px] items-center justify-center rounded-[2px] border border-white bg-[#808080] leading-none">VP</span>
          <span className="w-[54px]">MESM2</span>
          <span className="flex h-[14px] w-[14px] items-center justify-center rounded-[2px] border border-white"><Drop /></span>
          <span className="mx-[8px] flex h-[14px] w-[16px] items-center justify-center rounded-[2px] border border-white leading-none">I<Drop /></span>
          <span className="w-[136px]">Micro E-mini S&amp;P 500</span>
          <span className="w-[65px]">5 Minutes</span>
          <span className="flex h-[14px] w-[14px] items-center justify-center rounded-[2px] border border-white"><Drop /></span>
          <span className="mx-[8px] flex h-[14px] w-[20px] items-center justify-center rounded-[2px] border border-white leading-none">R<Drop /></span>
          <Cells cells={quote} />
          <Check className="mr-2" />
          <Cells cells={lowPass} />
          <Check className="mr-2 ml-px" />
          <Cells cells={floorPivots} />
        </div>
        <div className="absolute left-[1985px] top-[269px] flex h-[22px] w-[203px] items-center bg-[#37393b] pl-[34px] font-['Open_Sans'] text-[13px] text-[#2a2b2c]">Full-screen Snip</div>
        <div className="absolute left-0 top-[1312px] flex h-[18px] items-center pl-[5px] font-['Liberation_Sans'] text-[13px] text-white">
          <Check className="mr-2" />
          <Cells cells={murrey} />
        </div>
      </div>
      <div className="flex h-[21px] items-center border-b border-[#696969] bg-[#f0f0f0] pl-[5px] pr-[6px]">
        <Glyph size={11} box={11} d="k2 M8 1L3 5.500l5 4.500" />
        <div className="ml-[2196px] h-[19px] w-[1023px] bg-[#cdcdcd]" />
        <div className="ml-auto"><Glyph size={11} box={11} d="k2 M3 1l5 4.500L3 10" /></div>
      </div>
      <div className="flex h-[24px] items-center bg-[#e5e5e5]">
        <div className="flex h-full w-[97px] items-center justify-around bg-[#f0f0f0]">
          <Glyph size={12} box={12} d="+k M2 1h1.500v10H2ZM10 1v10L4 6Z" />
          <Glyph size={12} box={12} d="+k M9 1v10L3 6Z" />
          <Glyph size={12} box={12} d="+k M3 1v10l6-5Z" />
          <Glyph size={12} box={12} d="+k M9 1h1.500v10H9ZM2 1v10l6-5Z" />
        </div>
        <div className="relative h-[24px] w-[108px]">
          <svg width="108" height="24" className="absolute inset-0"><path d="M0 0L12 23.500H97L108 0" fill="#f8f8f8" stroke="#696969" /></svg>
          <span className="relative flex h-full items-center justify-center pr-[3px] text-[14.2px] font-bold tracking-[-0.6px]">OrderFlow</span>
        </div>
        <div className="ml-[7px]"><Glyph size={20} box={20} d={disc('g', 10, 10, 9.5) + '|w3 M10 4v12M4 10h12'} /></div>
      </div>
    </section>
  );
}

/* ---------- order entry ---------- */

const Btn = ({ children, className }: { children: ReactNode; className: string }) => <div className={`flex items-center justify-center border ${className}`}>{children}</div>;
const Spin = () => <Glyph size={20} box={20} d="#999999 M5 6l5-4 5 4|#999999 M5 14l5 4 5-4" />;
const UpDown = () => <Glyph size={20} box={20} d="#a0a0a0 M6 18V3M1 7l5-5 5 5M14 2v15M9 13l5 5 5-5" />;

function OrderPanel() {
  return (
    <aside className="flex w-[284px] flex-col border-b border-[#696969] bg-[#f0f0f0] pl-[6px] pr-[5px] pt-[6px] text-[13.5px]">
      <div className="flex h-[32px] items-center">
        <div className="flex h-full w-[49px] items-center border border-[#adadad] bg-[#e1e1e1] pl-[10px]">
          <i className="h-[10px] w-[10px] rounded-full bg-[#36b37e]" />
          <i className="ml-[9px] h-[22px] w-px bg-black" />
          <span className="ml-[4px]"><Glyph size={12} box={12} d="x1.8 M2 4l4 4 4-4" /></span>
        </div>
        <div className="ml-[6px] flex h-full w-[187px] items-center justify-between border border-[#707070] px-[6px]">
          37108349 <Glyph size={12} box={12} d="k1.5 M2 4l4 4 4-4" />
        </div>
        <span className="ml-[11px]"><Glyph size={14} box={14} d="#888888 M1 1l12 12M13 1L1 13" /></span>
      </div>
      <div className="mt-[6px] flex h-[31px] justify-between">
        <Btn className="w-[89px] border-[#1c6a9c] bg-[#bbdcee]">Risk Mgmt.</Btn>
        <Btn className="w-[85px] border-[#9a9a9a] bg-[#dddddd]">Full</Btn>
        <Btn className="w-[89px] border-[#9a9a9a] bg-[#dddddd]">Compact</Btn>
      </div>
      <div className="mt-[19px] flex h-[27px] text-center leading-[29px]">
        <span className="w-[91px] border-b border-black font-bold">Market</span>
        <span className="w-[91px]">Limit</span>
        <span className="w-[91px]">Stop</span>
      </div>
      <div className="mt-[25px] flex h-[65px] justify-between">
        <Btn className="w-[87px] flex-col gap-[8px] border-[#1c5fa8] bg-[#b0bfdf]">
          <span className="leading-[20px]">Buy @</span>
          <b className="text-[14.5px] leading-[20px]">4,450.25</b>
        </Btn>
        <div className="flex w-[87px] flex-col items-center bg-[#e3e3e3] pt-[7px] text-[15px] font-bold leading-[22px]">
          <span>Flat</span>
          <span className="mt-[5px] h-[26px] w-[77px] bg-[#f0f0f0] text-center leading-[26px]">PnL</span>
        </div>
        <Btn className="w-[87px] flex-col gap-[8px] border-[#b5b5b5] bg-[#d3d3d3]">
          <span className="leading-[20px]">Sell @</span>
          <b className="text-[14.5px] leading-[20px]">4,449.75</b>
        </Btn>
      </div>
      <div className="mt-[6px] flex h-[31px] justify-between text-[#757575]">
        <div className="flex w-[133px] items-center justify-between border border-[#adadad] pl-[6px] pr-[3px]">4,450.25 <Glyph size={10} box={10} d="k1.5 M2 1l6 4-6 4" /></div>
        <div className="flex w-[133px] items-center justify-between border border-[#adadad] pl-[3px] pr-[8px]"><Glyph size={10} box={10} d="k1.5 M8 1L2 5l6 4" /> Ask</div>
      </div>
      <div className="mt-[19px] flex h-[31px] justify-between">
        <div className="flex w-[133px] items-center border border-[#1c5fa8] bg-white pl-[4px]">
          <b>5</b>
          <span className="ml-auto mr-[4px]"><Glyph size={16} box={16} d="k1.3 M2 1h12v14H2ZM3 4h10|k2 M4.500 7h2M8 7h2M11 7h2M4.500 10h2M8 10h2M11 10h2M4.500 13h2M8 13h2M11 13h2" /></span>
          <span className="mr-px"><Spin /></span>
        </div>
        <div className="flex w-[133px] items-center justify-between border border-[#707070] bg-white px-[6px]"><UpDown /> 75.00</div>
      </div>
      <div className="mt-[7px] flex h-[31px] items-center justify-between border border-[#707070] px-[6px]">GTC <Glyph size={12} box={12} d="k1.5 M2 4l4 4 4-4" /></div>
      <Btn className="mt-[6px] h-[50px] border-[#adb5c5] bg-[#b0bfdf] font-bold">Buy 5 @ Market</Btn>
      <div className="mt-[19px] flex h-[56px] justify-between pl-[39px] pr-[39px]">
        <Btn className="w-[56px] border-[#90b4dc] bg-[#b9d1ea]"><Glyph size={30} box={30} d={'#0b8a54 M5 2h23M16 25c6 0 8-8 8-21M21 8l3-5 3 5|' + ring('k', 10, 25, 3) + '|x1 M5 25h10M10 20v10'} /></Btn>
        <Btn className="w-[56px] border-[#90b4dc] bg-[#b9d1ea]"><Glyph size={30} box={30} d={'#c0392b M4 28h23M18 6c-7 0-9 8-9 19M6 21l3 5 3-5|' + disc('#c0392b', 22, 6, 3.5) + '|w1.3 M20 6h4'} /></Btn>
      </div>
      <div className="mt-[6px] flex h-[31px] justify-between font-bold">
        <div className="flex w-[133px] items-center justify-between border border-[#1c5fa8] bg-white pl-[6px] pr-px">12 ticks <Spin /></div>
        <div className="flex w-[133px] items-center justify-between border border-[#1c5fa8] bg-white pl-px pr-[5px]"><Spin /> 12 ticks</div>
      </div>
      <div className="mt-[6px] flex h-[31px] justify-between">
        <div className="flex w-[133px] items-center border border-[#707070] bg-white pl-[4px]">4,453.25</div>
        <div className="flex w-[133px] items-center justify-end border border-[#707070] bg-white pr-[6px]">4,447.25</div>
      </div>
      <div className="mt-[7px] flex h-[31px] justify-between">
        <div className="flex w-[133px] items-center justify-between border border-[#707070] bg-white px-[6px]">75.00 <UpDown /></div>
        <div className="flex w-[133px] items-center justify-between border border-[#707070] bg-white px-[6px]"><UpDown /> 75.00</div>
      </div>
      <div className="mt-[6px] flex h-[31px] justify-between text-[#838383]">
        {['Cancel All', 'Close', 'Reverse'].map((t) => (
          <Btn key={t} className="w-[87px] border-[#bfbfbf] bg-[#cccccc]">{t}</Btn>
        ))}
      </div>
    </aside>
  );
}

/* ---------- bottom bars ---------- */

const wide = 'w-[37.1px]';

const Pick = ({ d, label, gap = 'w-[19px]' }: { d: string; label?: string; gap?: string }) => (
  <>
    <Slot w={wide}><Glyph d={d} label={label} /></Slot>
    <div className={`flex shrink-0 justify-center ${gap}`}><Down /></div>
  </>
);

function DrawingBar() {
  return (
    <div className="flex h-[47px] items-center bg-white text-[14px]">
      <div className="ml-[5px] mr-[5px] h-full border-l border-dashed border-[#a0a0a0]" />
      {drawIcons.map((g, i) => (
        <div key={i} className="flex items-center"><Slots icons={g} w={wide} /><Sep /></div>
      ))}
      <Slots w={wide} icons={['r3.5 M4 2v12c0 5 3 7 7 7|b3.5 M18 2v12c0 5-3 7-7 7', '+y M1 22l2-7L14 4l5 4L8 19Z|+r M15 2l3-2 5 4-3 3Z|+k M11 14h12v9H11Z|k1.8 M13 14v-3c0-4 8-4 8 0v3']} />
      <div className="ml-[7px] flex h-full"><Gutter /></div>
      <div className="flex h-[28px] w-[186px] items-center justify-between border border-[#707070] pl-[6px] pr-[4px] tracking-[-0.35px]">Type a symbol/interval <Glyph size={12} box={12} d="k1.3 M2 4l4 4 4-4" /></div>
      <div className="ml-[3px] flex h-[35px] w-[63px] items-center border border-[#99d1ff] bg-[#cce8ff]">
        <div className="flex h-full w-[43px] items-center justify-center border-r border-[#99d1ff] pl-1"><Glyph d={ring('b1.6', 12, 12, 9.5) + '|b1.3 M12 13l5-6M12 13H6'} /></div>
        <div className="flex flex-1 justify-center"><Down /></div>
      </div>
      <div className="ml-[8px] flex h-full"><Gutter /></div>
      <Pick d={'k1.5 M2 21l6-12 6 7 8-13|+g M0 19h4v4H0ZM6 7h4v4H6ZM12 14h4v4h-4ZM20 1h4v4h-4Z'} />
      <Pick d="b2 M1 10l6-4 5 3L23 1|g1.7 M2 23V13M6 23V10M10 23V13M14 23V11M18 23V8M22 23V6" />
      <Pick d="g1.5 M6 2h5v20H6Z|k1.2 M17 2v20M14 2h6M14 22h6" />
      <Pick d={clock} label="S" />
      <Pick d={clock} label="M" />
      <Pick d={clock} label="H" />
      <Pick d={table('k')} label="D" gap="w-[18px]" />
      <Slot w={wide}><Glyph d={table('k') + '|g4 M2 8h18|' + disc('r', 17.5, 18, 5.5)} label="W" /></Slot>
      <Slot w={wide}><Glyph d={table('g')} label="M" /></Slot>
      <Slot w={wide}><Glyph d={ring('k1.6', 12, 12, 9.5) + '|+g M12 2a10 10 0 0 1 10 10H12Z|' + disc('r', 17.5, 18, 5.5)} label="Q" /></Slot>
      <Slot w={wide}><Glyph d={'k1.4 M2 3v19h20V3|+g M1 2h22v6H1Z|g2 M6 0v4M18 0v4|' + disc('r', 17.5, 18, 5.5)} label="Y" /></Slot>
      <div className="ml-[8px] flex h-full"><Gutter /></div>
      <div className="flex h-[28px] w-[164px] items-center justify-between border border-[#adadad] bg-[#e1e1e1] pl-[4px] pr-[5px] tracking-[-0.35px]">As is (5 Minutes) <Glyph size={12} box={12} d="k1.3 M2 4l4 4 4-4" /></div>
      <div className="mr-[6px] ml-px h-[38px] w-px bg-[#8a8a8a]" />
      <div className="flex h-[26px] w-[189px] items-center justify-end gap-[2px] border border-[#707070] pr-[7px]">
        <Glyph size={16} box={16} d="#8a97a8 M2 1h12v14H2ZM2 4h12M2 8h12M2 12h12M6 4v11M10 4v11" />
        <Down c="border-t-[#35568c]" />
      </div>
      <Slot><Glyph d={'k1.3 M2 3v18h20V3|k4 M1 3h22|k1.5 M5 9h5M5 13h5M5 17h5M13 9h6|' + disc('k') + '|+w M16 15l5 3-5 3Z'} /></Slot>
      <Sep />
      <Slot><Glyph d="g1.5 M5 4v18M2 7h3M5 18h3|k1.3 M18 8h-5V5l-5 5 5 4v-3h5Z" /></Slot>
      <span className="w-[43px] tracking-[-0.4px]">Jump</span>
      <Sep />
      <div className="flex w-[205px] shrink-0 items-center justify-between px-[17px]">
        <Glyph size={12} box={12} d="+#808080 M7 0v12L1 6ZM8 0h2v12H8Z" />
        <Down c="border-t-[#707070]" />
        <Glyph size={12} box={12} d="+#808080 M4 0v12l5-6Z" />
        <span className="ml-[12px]"><Glyph size={12} box={12} d="+#808080 M5 0v12l6-6ZM2 0h2v12H2Z" /></span>
        <Down c="border-t-[#707070]" />
        <Glyph size={12} box={12} d="+#808080 M2 0v12l6-6ZM9 0h2v12H9Z" />
      </div>
      <Sep />
      <div className="relative ml-[7px] mr-[8px] h-[4px] w-[110px] border border-[#d6d6d6] bg-[#e7eaea]">
        <div className="absolute left-[52px] top-[-8px] h-[18px] w-[8px] bg-[#0078d7]" />
      </div>
      <Sep />
      <Slot><Glyph d={'k1.5 M6 20H2V3h16v4|k3 M2 3h16|k1.5 M7 10h14v11H7Z|k3 M7 10h14|' + disc('k') + '|+w M16 15l5 3-5 3Z'} /></Slot>
      <span className="w-[97px] text-[14.2px] text-[#a0a0a0]">Global Mode</span>
      <div className="h-[38px] w-px bg-[#8a8a8a]" />
    </div>
  );
}

function StatusBar() {
  return (
    <div className="flex h-[33px] items-center border-t border-[#d0d0d0] bg-[#f0f0f0]">
      <span className="w-[1819px] pl-[2px] text-[14.6px]">Toggle Global/Local Mode</span>
      <Glyph size={19} box={19} d="+x M9.500 4l5 6h-3v5h-4v-5h-3Z|#222222 M1 1h17v17H1Z" />
      <span className="ml-[4px] font-['Liberation_Sans'] text-[16.500px] tracking-[-1.15px] text-[#3a3a3a]">Trading Platform by Rithmic<sup className="text-[8px]">™</sup></span>
      <div className="ml-auto flex h-full items-center">
        <div className="h-full w-[109px] border-l border-[#d0d0d0]" />
        <div className="h-full w-[109px] border-l border-[#d0d0d0]" />
        <div className="flex h-full w-[160px] items-center border-l border-[#d0d0d0] pl-[5px] text-[13.500px]">(UTC-5:00) 17:27:56</div>
        <div className="flex h-full w-[32px] items-center justify-center border-l border-[#d0d0d0]"><i className="h-[18px] w-[19px] bg-[#3cb371]" /></div>
        <div className="h-full w-[17px] border-l border-[#d0d0d0]" />
      </div>
    </div>
  );
}

const Letters = ({ text, bg, fg = '#fff', edge = '#21d789' }: { text: string; bg: string; fg?: string; edge?: string }) => (
  <svg width="32" height="32" viewBox="0 0 32 32">
    <path d="M2 3l10-2 7 3 9-2 3 9-2 8 2 9-9 3-8-2-9 2-4-9 2-8Z" fill={edge} />
    <path d="M2 16l2 13 9 1v-6ZM20 2l8 0 2 8h-6Z" fill={bg} />
    <rect x="6" y="6" width="20" height="20" fill="#000" />
    <text x="8" y="17" fontSize="11" fontWeight="bold" fill={fg} fontFamily="Liberation Sans, sans-serif" textLength="15" lengthAdjust="spacingAndGlyphs">{text}</text>
    <path d="M8 22.500h8" stroke="#fff" strokeWidth="1.500" />
  </svg>
);
const OfficeApp = ({ letter, dark, mid, light }: { letter: string; dark: string; mid: string; light: string }) => (
  <svg width="32" height="32" viewBox="0 0 32 32">
    <path d="M9 2h21v28H9Z" fill={mid} />
    <path d="M19 2h11v9H19ZM9 2h10v9H9Z" fill={light} />
    <path d="M9 21h21v9H9Z" fill={dark} />
    <rect x="1" y="8" width="16" height="16" rx="1" fill={dark} />
    <text x="9" y="20" fontSize="11" fontWeight="bold" textAnchor="middle" fill="#fff" fontFamily="Liberation Sans, sans-serif">{letter}</text>
  </svg>
);

const A = (d: string) => <Glyph size={32} box={32} d={d} />;
const apps: ReactNode[] = [
  A('+#0c59a4 M1 16a15 15 0 0 1 30-2c0 6-5 7-9 7-3 0-3-2-2-4-1-6-9-7-13-2Z|+#2bc3d2 M2 12C8-3 31-1 31 14c0 5-4 7-9 7-3 0-3-2-2-4 1-9-10-12-18-5Z|+#5fdc63 M19 3c8 1 12 6 12 11 0 5-4 7-9 7 8-3 6-13-3-18Z|+#1b7fd6 M1 16c2-5 8-7 12-4-5 6 0 15 13 14-8 9-24 5-25-10Z'),
  A('+#e9a800 M2 4h10l3 3h15v8H2Z|+#ffd767 M2 9h28v19H2Z|+#3d9be0 M6 18h20v10h-5v-5H11v5H6Z'),
  A('#2aa8e0 2 M11 9V3h10v6|+#f2f2f2 M2 8h28v21l-3 2H5l-3-2Z|+#f25022 M10 13h5v5h-5Z|+#7fba00 M17 13h5v5h-5Z|+#00a4ef M10 20h5v5h-5Z|+#ffb900 M17 20h5v5h-5Z'),
  A('+#6b7680 M4 1h24v30H4Z|+#35b5e8 M7 4h18v5H7Z|+#b8c2ca M7 12h5v4H7ZM14 12h5v4h-5ZM21 12h4v4h-4ZM7 18h5v4H7ZM14 18h5v4h-5ZM7 24h5v4H7ZM14 24h5v4h-5Z|+#1c5aa8 M21 18h4v10h-4Z'),
  A(`${disc('#8e5fa8', 16, 16, 15)}|+#ef6b4a M16 1a15 15 0 0 1 15 13L16 16 2 22A15 15 0 0 1 16 1Z|${disc('#242833', 16, 16, 12.5)}|${disc('#ffffff', 16, 17, 6)}|${disc('#ef6b4a', 16, 17, 2)}|+#ef6b4a M21 5l8 6-5 1Z`),
  <svg key="ph" width="32" height="32" viewBox="0 0 32 32"><rect x="1" width="30" height="32" fill="#2a3140" /><rect x="5" y="5" width="22" height="15" rx="2" fill="#a8a8a8" /><path d="M16 5v9" stroke="#888" /><text x="16" y="28" textAnchor="middle" fontSize="5" fill="#77808c">PHONOS</text></svg>,
  A(`${disc('#1ed760', 16, 16, 15)}|#0b1a12 3 M7 11c7-2 13-1 19 2|#0b1a12 2.6 M8 16.500c6-2 11-1 16 2|#0b1a12 2.2 M9 21.500c5-1 9-1 13 2`),
  A(`${disc('#0f7fe8', 16, 16, 15)}|w2 M13 27c-3-8 0-18 4-22 4 5-2 9-7 12 5 2 10 2 14-1M7 22c6 2 16-3 17-9`),
  A(`${disc('#ffffff', 16, 16, 15)}|+#00a82d M8 11l5-6c6-1 11 1 11 9 0 8-1 13-6 12-3-1-1-5 2-4-1-3-2-3-4-2-5 1-8-2-8-9Z|w1.5 M19 15c1-1 3-1 3 1`),
  A('+#1d5dab M1 3l15-3 15 3v26H1Z|+#5aa5e8 M1 3l15-3 15 3v9H1Z|+#0b2f78 M14 22h17v7H8Z|' + ring('w2.2', 17, 14, 9) + '|w2 M17 9v10M13 13h8M10 21l-8 9'),
  A(`${disc('#e8364f', 16, 18, 14)}|+#ff9a1f M4 12C5 5 8 7 8 4l4 5 8-8c6 7 11 8 10 18-1 7-6 12-14 12C6 31 1 22 4 12Z|${disc('#7a4be0', 16, 18, 7)}|+#ff5c2e M4 15c4 10 10 11 18 8-5 10-17 8-18-8Z`),
  <OfficeApp key="x" letter="X" dark="#107c41" mid="#21a366" light="#33c481" />,
  A(`+#1e1e1e M1 0h30v32H1Z|+#f24e1e M16 4h-4a4 4 0 0 0 0 8h4Z|+#ff7262 M16 4h4a4 4 0 0 1 0 8h-4Z|+#a259ff M16 12h-4a4 4 0 0 0 0 8h4Z|${disc('#1abcfe', 20, 16, 4)}|+#0acf83 M16 20h-4a4 4 0 1 0 4 4Z`),
  A('+#f8991c M1 1h30v30H1Z|w2 M5 15l11 8 11-8M8 14c5-6 12-5 16 1M11 16c3-3 7-3 9 1'),
  <svg key="am" width="32" height="32" viewBox="0 0 32 32"><rect width="31" height="31" fill="#4500d8" /><text x="15.5" y="14" textAnchor="middle" fontSize="8.5" fill="#fff" fontWeight="bold" fontFamily="Open Sans, sans-serif" textLength="27" lengthAdjust="spacingAndGlyphs">amazon</text><text x="15.5" y="24" textAnchor="middle" fontSize="9" fill="#c8b8ff" fontWeight="bold" fontFamily="Open Sans, sans-serif">music</text></svg>,
  <OfficeApp key="w" letter="W" dark="#185abd" mid="#2b7cd3" light="#41a5ee" />,
  <Letters key="pc" text="PC" bg="#fcf84a" />,
  <Letters key="ws" text="WS" bg="#0f5fd0" edge="#08b8f0" />,
  <Letters key="cl" text="CL" bg="#e83080" edge="#22c8a8" />,
  A('+#0065a9 M22 1l8 4v22l-8 4L6 13l-4 3V10l3-2Z|+#007acc M22 1v9L6 24l-4-2v-4Z|+#1f9cf0 M22 1l8 4v22l-8 4Z'),
  A(`${disc('#ea4335', 16, 16, 15)}|+#34a853 M3 9l10 20A15 15 0 0 1 3 9Z|+#fbbc05 M31 13l-3 12-13 6 6-13Z|${disc('#ffffff', 16, 16, 7)}|${disc('#4285f4', 16, 16, 5.5)}|${disc('#6b5646', 22, 24, 8)}|${disc('#c9a98a', 22, 22, 3)}`),
  A('+#e8eee4 M3 4h21l4 4v22H3Z|k1.5 M6 2v5M10 2v5M14 2v5M18 2v5|+#7cc83c M5 14c6-6 16-4 18 2 2 7-3 10-8 10S4 22 5 14Z|#2b5d17 M8 17c5-4 8 4 13 0M9 21h9|y2.5 M31 2L22 15'),
  <MultiChartsLogo key="mc" size={32} />,
  A('#9bc32c 2 M4 6l24-4v28H4Z|+#b6e01c M16 7l7 7h-4l-1 10-7 2 3-4v-7H9Z'),
];

function Taskbar() {
  return (
    <div className="flex h-[50px] items-center bg-[#1c2e3b] text-white">
      <div className="flex w-[60px] justify-center"><Glyph size={22} box={22} d="+w M0 3l10-1.500v9H0ZM11 1.300L22 0v10.500H11ZM0 11.500h10v9L0 19ZM11 11.500h11V22l-11-1.500Z" /></div>
      <div className="flex w-[60px] justify-center"><Glyph size={22} box={22} d={ring('w1.6', 13, 8, 6.5) + '|w1.7 M9 13L1 21'} /></div>
      <div className="flex w-[60px] justify-center"><i className="h-[20px] w-[20px] rounded-full border-[2.5px] border-white" /></div>
      <div className="mr-[3px] flex w-[60px] justify-center"><Glyph size={22} box={22} d="w1.5 M2 1v3h12V1M2 7h12v8H2ZM2 21v-3h12v3M19 1v20M17 8h4" /></div>
      {apps.map((a, i) => (
        <div key={i} className={`relative flex h-full w-[62px] shrink-0 items-center justify-center ${i === 22 ? 'bg-[#4b5a64]' : ''}`}>
          {a}
          {i === 20 && <div className="absolute bottom-0 left-[6px] h-[3px] w-[51px] bg-[#76b9ed]" />}
          {i === 22 && <div className="absolute bottom-0 left-0 h-[3px] w-[62px] bg-[#76b9ed]" />}
          {i === 23 && <div className="absolute bottom-0 left-[6px] h-[3px] w-[51px] border-r-[10px] border-[#4f7c9e] bg-[#76b9ed]" />}
        </div>
      ))}
      <div className="ml-auto flex h-full items-center">
        <span className="flex w-[30px] justify-center"><Glyph size={18} box={18} d="w1.5 M1 13l8-8 8 8" /></span>
        <span className="flex w-[30px] justify-center"><Glyph size={20} box={20} d="+#0f78d4 M0 14c0-4 3-5 5-5 2-5 9-5 11-1 3 0 4 3 4 5l-1 3H3c-2 0-3-1-3-2Z|+#28a8ea M6 16l9-6c3-1 5 1 5 3s-1 3-3 3Z" /></span>
        <span className="flex w-[30px] justify-center"><Glyph size={20} box={20} d="w M5 4h14v10H5M8 17h8M12 14v3M1 2h4v5H1ZM3 7v10h3" /></span>
        <span className="flex w-[30px] justify-center"><Glyph size={20} box={20} d="w M1 7h3l4-4v14l-4-4H1ZM11 8c1 1 1 3 0 4M14 6c2 2 2 6 0 8M17 4c3 3 3 9 0 12" /></span>
        <span className="flex w-[40px] justify-center"><Glyph size={30} box={30} d="w M0.500 8h29v15h-29Z|w1 M4 12h1M7 12h1M10 12h1M13 12h1M16 12h1M19 12h1M22 12h1M25 12h1M4 15h1M7 15h1M10 15h1M13 15h1M16 15h1M19 15h1M22 15h1M25 15h1M7 19h15" /></span>
        <div className="flex w-[84px] flex-col pt-px text-center text-[13.200px] leading-[22px]">
          <span>5:27 PM</span>
          <span>3/23/2022</span>
        </div>
        <div className="relative ml-[14px] w-[44px]">
          <Glyph size={22} box={22} d="+w M1 2h20v16h-6l-4 4v-4H1Z|#1c2e3b 1 M5 7h12M5 10h12M5 13h8" />
          <span className="absolute left-[10px] top-[9px] flex h-[20px] w-[20px] items-center justify-center rounded-full border border-[#9aa3a9] bg-[#2c3840] text-[12px]">3</span>
        </div>
        <div className="h-full w-[6px] border-l border-[#5e6b74]" />
      </div>
    </div>
  );
}

export default function App() {
  return (
    <div className="flex h-[2160px] w-[3840px] flex-col overflow-hidden bg-white font-['Open_Sans',sans-serif] leading-normal text-black">
      <TitleBar />
      <MenuBar />
      <div className="h-px" />
      <Toolbar />
      <div className="flex h-[1929px] bg-[#e5e5e5]">
        <DataWindow />
        <ChartWindow />
        <div className="flex h-[1905px]">
          <OrderPanel />
        </div>
      </div>
      <DrawingBar />
      <StatusBar />
      <Taskbar />
    </div>
  );
}
